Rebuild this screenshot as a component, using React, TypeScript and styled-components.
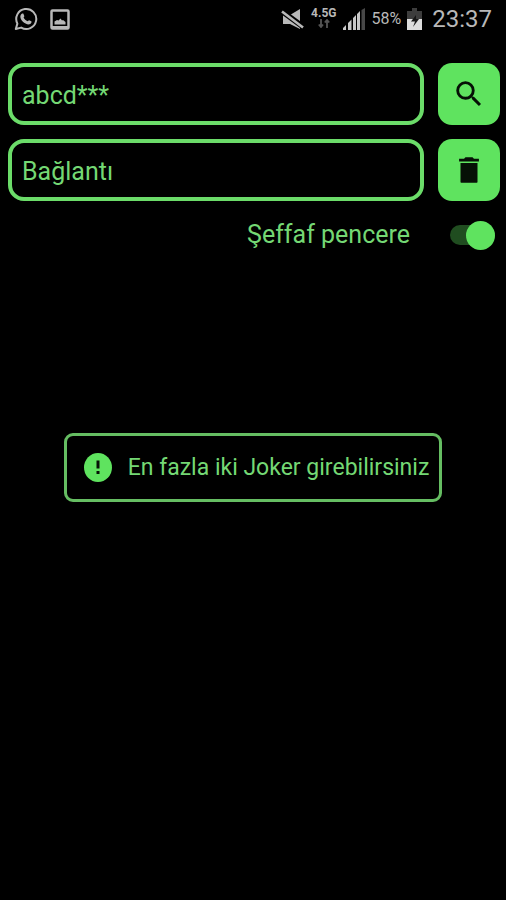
import React, { useState } from "react";
import styled, { createGlobalStyle } from "styled-components";

const green = "#5fe35f";

const GlobalStyle = createGlobalStyle`
  * { box-sizing: border-box; }
  body {
    margin: 0;
    background: #000;
    font-family: Roboto, "Liberation Sans", sans-serif;
  }
`;

const Screen = styled.div`
  display: flex;
  flex-direction: column;
  min-height: 100vh;
  background: #000;
  color: #74d874;
`;

const StatusBar = styled.header`
  display: flex;
  align-items: center;
  justify-content: space-between;
  height: 38px;
  padding: 0 14px 0;
  color: #b8b8b8;
`;

const StatusGroup = styled.div<{ $gap: number }>`
  display: flex;
  align-items: center;
  gap: ${(p) => p.$gap}px;
`;

const Network = styled.div`
  display: flex;
  flex-direction: column;
  align-items: center;
  padding-bottom: 3px;
  font-size: 12px;
  font-weight: 700;
  line-height: 12px;
`;

const Percent = styled.span`
  font-size: 16px;
  line-height: 20px;
`;

const Clock = styled.time`
  margin-left: 4px;
  font-size: 24px;
  line-height: 28px;
`;

const Form = styled.form`
  display: flex;
  flex-direction: column;
  gap: 14px;
  padding: 25px 6px 0 8px;
`;

const Row = styled.div`
  display: flex;
  gap: 14px;
`;

const Field = styled.input`
  flex: 1;
  min-width: 0;
  height: 62px;
  padding: 2px 10px 0;
  border: 4px solid #6bdc69;
  border-radius: 16px;
  outline: none;
  background: #000;
  color: inherit;
  font: 25px Roboto, "Liberation Sans", sans-serif;
`;

const IconButton = styled.button`
  display: grid;
  place-items: center;
  flex: none;
  width: 62px;
  height: 62px;
  padding: 0;
  border: 0;
  border-radius: 14px;
  background: ${green};
  color: #061006;
`;

const SwitchRow = styled.label`
  display: flex;
  align-items: center;
  justify-content: flex-end;
  gap: 40px;
  padding: 0 5px 0 0;
  font-size: 25px;
  line-height: 40px;
`;

const Toggle = styled.input`
  appearance: none;
  display: flex;
  align-items: center;
  width: 45px;
  height: 20px;
  margin: 0;
  border-radius: 10px;
  background: #204d20;

  &::before {
    content: "";
    flex: none;
    width: 29px;
    height: 29px;
    border-radius: 50%;
    background: ${green};
  }

  &:checked::before {
    margin-left: auto;
  }
`;

const Main = styled.main`
  display: flex;
  flex: 1;
  align-items: flex-start;
  justify-content: center;
  padding: 178px 24px 24px;
`;

const Notice = styled.div`
  display: flex;
  align-items: center;
  gap: 16px;
  padding: 17px 10px 17px 17px;
  border: 3px solid #65bd62;
  border-radius: 9px;
  font-size: 23px;
  line-height: 28px;
`;

function ChatIcon() {
  return (
    <svg width="24" height="24" viewBox="0 0 24 24" fill="none" stroke="currentColor" aria-hidden="true">
      <path d="M1.8 22 3.4 16.6A10 10 0 1 1 7.2 20.6Z" strokeWidth="2" strokeLinejoin="round" />
      <path d="M8.1 6.6c.5-.3 1-.3 1.3.2l.9 2.1c.2.5-.7 1.2-.7 1.5.9 1.9 2.1 2.9 4 3.8.4.1 1-1.1 1.5-1l2.2 1.1c.8.5-.2 2.7-1.7 3-2 .6-5-.9-6.7-2.5C7 13 5.7 10 6.6 8.2c.3-.7.8-1.3 1.5-1.6Z" fill="currentColor" stroke="none" />
    </svg>
  );
}

function PictureIcon() {
  return (
    <svg width="20" height="21" viewBox="0 0 20 21" fill="none" aria-hidden="true">
      <rect x="1.5" y="1.5" width="17" height="18" rx="1" stroke="currentColor" strokeWidth="2.5" />
      <path d="M4.500 15.500v-3l2.500-1.500 1.500.5 2-2 1.500 2 1-.6 2.500 2v2.600Z" fill="currentColor" />
      <path d="M2 18.500h16" stroke="currentColor" strokeWidth="3" />
    </svg>
  );
}

function MutedIcon() {
  return (
    <svg width="24" height="20" viewBox="0 0 24 20" fill="currentColor" aria-hidden="true">
      <path d="M2 6h7l10-6v20L9 15H2Z" />
      <path d="M0 1.500 23 18.500" stroke="#000" strokeWidth="5.500" />
      <path d="M1 2.500 22 18.500" stroke="currentColor" strokeWidth="2.600" />
    </svg>
  );
}

function TransferIcon() {
  return (
    <svg width="12" height="9" viewBox="0 0 12 9" fill="none" stroke="#555" strokeWidth="1.8" aria-hidden="true">
      <path d="M3 0v8M.8 5.500 3 8l2-2.500M9 9V1M6.800 3.500 9 1l2.200 2.500" />
    </svg>
  );
}

function SignalIcon() {
  return (
    <svg width="23" height="22" viewBox="0 0 23 22" aria-hidden="true">
      <path d="M0 22v-2l3-3v5ZM5 22v-7l3.500-3.500V22ZM10 22V10l3-3v15ZM14 22V6l3-3v19Z" fill="#c8c8c8" />
      <path d="M18.500 22V2L22 0v22Z" fill="#484848" />
    </svg>
  );
}

function BatteryIcon() {
  return (
    <svg width="15" height="22" viewBox="0 0 15 22" aria-hidden="true">
      <path d="M5 0h5v3h5v8H0V3h5Z" fill="#3d3d3d" />
      <path d="M0 11h15v11H0Z" fill="#dcdcdc" />
      <path d="m9 7-5 6.500h4L6 19l6-8H9Z" fill="#161616" />
    </svg>
  );
}

function SearchIcon() {
  return (
    <svg width="34" height="34" viewBox="0 0 24 24" fill="currentColor" aria-hidden="true">
      <path d="M15.500 14h-.79l-.28-.27A6.470 6.470 0 0 0 16 9.500 6.500 6.500 0 1 0 9.500 16c1.610 0 3.090-.59 4.230-1.570l.27.28v.79l5 4.990L20.490 19l-4.990-5Zm-6 0a4.500 4.500 0 1 1 0-9 4.500 4.500 0 0 1 0 9Z" />
    </svg>
  );
}

function TrashIcon() {
  return (
    <svg width="34" height="34" viewBox="0 0 24 24" fill="currentColor" aria-hidden="true">
      <path d="M6 20.500q0 .5.500.5h11q.5 0 .5-.5V7H6ZM19 4h-3.500l-1-1h-5l-1 1H5v2h14Z" />
    </svg>
  );
}

function AlertIcon() {
  return (
    <svg width="28" height="29" viewBox="0 0 28 29" aria-hidden="true">
      <ellipse cx="14" cy="14.5" rx="14" ry="14.5" fill={green} />
      <path d="M12.500 7.500h3v8h-3zM12.500 18h3v3h-3z" fill="#061006" />
    </svg>
  );
}

export default function App() {
  const [query, setQuery] = useState("abcd***");
  const [link, setLink] = useState("Bağlantı");
  const [transparent, setTransparent] = useState(true);

  return (
    <Screen>
      <GlobalStyle />
      <StatusBar>
        <StatusGroup $gap={12}>
          <ChatIcon />
          <PictureIcon />
        </StatusGroup>
        <StatusGroup $gap={6}>
          <MutedIcon />
          <Network>
            4.5G
            <TransferIcon />
          </Network>
          <SignalIcon />
          <Percent>58%</Percent>
          <BatteryIcon />
          <Clock>23:37</Clock>
        </StatusGroup>
      </StatusBar>
      <Form onSubmit={(e) => e.preventDefault()}>
        <Row>
          <Field aria-label="Harfler" value={query} onChange={(e) => setQuery(e.target.value)} />
          <IconButton type="submit" aria-label="Ara">
            <SearchIcon />
          </IconButton>
        </Row>
        <Row>
          <Field aria-label="Bağlantı" value={link} onChange={(e) => setLink(e.target.value)} />
          <IconButton type="button" aria-label="Sil" onClick={() => { setQuery(""); setLink(""); }}>
            <TrashIcon />
          </IconButton>
        </Row>
        <SwitchRow>
          Şeffaf pencere
          <Toggle
            type="checkbox"
            role="switch"
            checked={transparent}
            onChange={(e) => setTransparent(e.target.checked)}
          />
        </SwitchRow>
      </Form>
      <Main>
        <Notice role="alert">
          <AlertIcon />
          En fazla iki Joker girebilirsiniz
        </Notice>
      </Main>
    </Screen>
  );
}
